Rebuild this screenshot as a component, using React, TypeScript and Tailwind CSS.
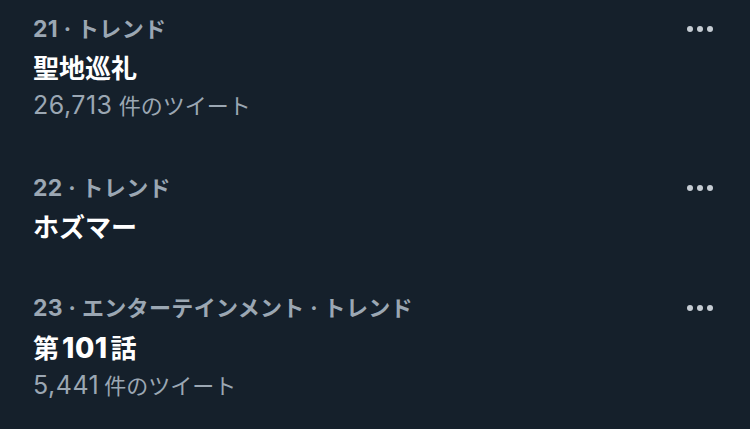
import React from "react";

type Trend = {
  rank: number;
  context: string;
  title: string;
  count?: string;
};

const trends: Trend[] = [
  { rank: 21, context: "トレンド", title: "聖地巡礼", count: "26,713 件のツイート" },
  { rank: 22, context: "トレンド", title: "ホズマー" },
  { rank: 23, context: "エンターテインメント · トレンド", title: "第101話", count: "5,441件のツイート" },
];

// latin digits render larger than the kana next to them
const withDigits = (text: string, digitClass: string, gapClass = "") =>
  text.split(/([0-9,]+)/).map((part, i, all) =>
    /^[0-9,]+$/.test(part) ? (
      <span key={i} className={`${digitClass} ${all[i + 1]?.startsWith(" ") ? "" : gapClass}`}>
        {part}
      </span>
    ) : (
      <React.Fragment key={i}>{part}</React.Fragment>
    )
  );

const MoreDots: React.FC = () => (
  <div className="flex h-[28px] items-center gap-[4px]">
    <span className="h-[6px] w-[6px] rounded-full bg-[#c5ccd3]" />
    <span className="h-[6px] w-[6px] rounded-full bg-[#c5ccd3]" />
    <span className="h-[6px] w-[6px] rounded-full bg-[#c5ccd3]" />
  </div>
);

export default function App() {
  return (
    <div
      className="h-[429px] w-[750px] overflow-hidden bg-[#15202b]"
      style={{ fontFamily: 'Inter, "Noto Sans CJK JP", sans-serif' }}
    >
      {trends.map((t) => (
        <div key={t.rank} className="flex items-start justify-between pl-[33px] pr-[37px] pt-[15px] pb-[34px]">
          <div className="flex flex-col">
            {/* rank + category */}
            <p className="text-[22px] font-bold leading-[28px] tracking-[0.35px] text-[#9ba7b3]">
              <span className="text-[23px]">{t.rank}</span> · {t.context}
            </p>
            <p className="mt-[9px] text-[26px] font-bold leading-[34px] text-white">
              {withDigits(t.title, "px-[3px] text-[28px] font-extrabold tracking-[0.5px]")}
            </p>
            {t.count && (
              <p className="text-[22px] leading-[38px] text-[#9ba7b3]">
                {withDigits(t.count, "text-[25px] tracking-[0.5px]", "pr-[5px]")}
              </p>
            )}
          </div>
          <MoreDots />
        </div>
      ))}
    </div>
  );
}
